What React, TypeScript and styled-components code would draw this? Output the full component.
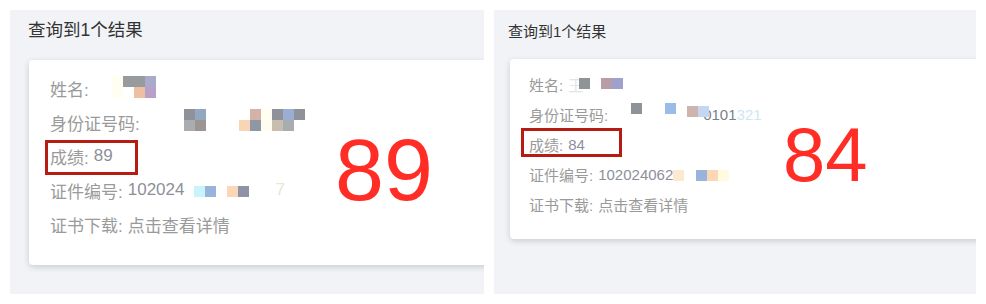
import React from 'react';
import styled, { createGlobalStyle } from 'styled-components';

const GlobalStyle = createGlobalStyle`
  body {
    margin: 0;
    background: #fff;
    font-family: "Liberation Sans", "Noto Sans CJK SC", sans-serif;
  }
`;

type Size = {
  panelW: number;
  titleSize: number;
  titlePad: string;
  cardTop: number;
  cardLeft: number;
  cardH: number;
  cardPad: string;
  rowH: number;
  fontSize: number;
  rowsW: number;
  bigSize: number;
  bigTop: number;
  box: { left: number; top: number; w: number; h: number };
};

const big: Size = {
  panelW: 474,
  titleSize: 17.5,
  titlePad: '10px 0 0 18px',
  cardTop: 20,
  cardLeft: 19,
  cardH: 205,
  cardPad: '11px 0 0 21px',
  rowH: 34,
  fontSize: 17,
  rowsW: 285,
  bigSize: 88,
  bigTop: 55,
  box: { left: -5, top: 1, w: 93, h: 35 },
};

const small: Size = {
  panelW: 482,
  titleSize: 15,
  titlePad: '12px 0 0 14px',
  cardTop: 17,
  cardLeft: 16,
  cardH: 180,
  cardPad: '10px 0 0 19px',
  rowH: 30,
  fontSize: 15,
  rowsW: 254,
  bigSize: 76,
  bigTop: 48,
  box: { left: -8, top: -1, w: 101, h: 29 },
};

const Page = styled.div`
  display: flex;
  gap: 10px;
  padding: 10px;
`;

const Panel = styled.div<{ $s: Size }>`
  width: ${(p) => p.$s.panelW}px;
  height: 284px;
  background: #f2f3f7;
  overflow: hidden;
  display: flex;
  flex-direction: column;
`;

const Title = styled.div<{ $s: Size }>`
  padding: ${(p) => p.$s.titlePad};
  font-size: ${(p) => p.$s.titleSize}px;
  line-height: 20px;
  color: #333;
`;

const Card = styled.div<{ $s: Size }>`
  margin: ${(p) => p.$s.cardTop}px 0 0 ${(p) => p.$s.cardLeft}px;
  width: 640px;
  height: ${(p) => p.$s.cardH}px;
  box-sizing: border-box;
  padding: ${(p) => p.$s.cardPad};
  background: #fff;
  border-radius: 4px;
  box-shadow: 0 2px 6px rgba(0, 0, 0, 0.16);
  display: flex;
  flex-shrink: 0;
`;

const Rows = styled.div<{ $s: Size }>`
  width: ${(p) => p.$s.rowsW}px;
  flex-shrink: 0;
  display: flex;
  flex-direction: column;
`;

const Row = styled.div<{ $s: Size; $mark?: boolean }>`
  position: relative;
  display: flex;
  align-items: center;
  height: ${(p) => p.$s.rowH}px;
  font-size: ${(p) => p.$s.fontSize}px;
  color: #9a9a9a;
  white-space: nowrap;

  &::after {
    content: '';
    display: ${(p) => (p.$mark ? 'block' : 'none')};
    position: absolute;
    left: ${(p) => p.$s.box.left}px;
    top: ${(p) => p.$s.box.top}px;
    width: ${(p) => p.$s.box.w}px;
    height: ${(p) => p.$s.box.h}px;
    box-sizing: border-box;
    border: 3px solid #b71c12;
  }
`;

const Value = styled.span<{ $gap?: number; $color?: string }>`
  margin-left: ${(p) => p.$gap ?? 5}px;
  color: ${(p) => p.$color ?? '#8e9099'};
`;

const Mosaic = styled.span<{ $cols: number; $gap: number; $shift?: number }>`
  display: inline-grid;
  grid-template-columns: repeat(${(p) => p.$cols}, 11px);
  grid-auto-rows: 11px;
  margin-left: ${(p) => p.$gap}px;
  transform: translateY(${(p) => p.$shift ?? 0}px);
  filter: blur(0.3px);
`;

const Cell = styled.span<{ $c: string }>`
  background: ${(p) => p.$c};
`;

const Score = styled.div<{ $s: Size }>`
  margin-top: ${(p) => p.$s.bigTop}px;
  font-size: ${(p) => p.$s.bigSize}px;
  line-height: 1;
  color: #ff2d26;
  align-self: flex-start;
`;

const Block = ({ colors, cols, gap, shift }: { colors: string[]; cols: number; gap: number; shift?: number }) => (
  <Mosaic $cols={cols} $gap={gap} $shift={shift}>
    {colors.map((c, i) => (
      <Cell key={i} $c={c} />
    ))}
  </Mosaic>
);

const App: React.FC = () => {
  return (
    <>
      <GlobalStyle />
      <Page>
        <Panel $s={big}>
          <Title $s={big}>查询到1个结果</Title>
          <Card $s={big}>
            <Rows $s={big}>
              <Row $s={big}>
                姓名:
                <Block
                  cols={4}
                  gap={23}
                  shift={-1}
                  colors={['#fffef0', '#979b9d', '#979b9d', '#aaaacd', '#fffef0', '#ffffff', '#eebfa0', '#b8a0c8']}
                />
              </Row>
              <Row $s={big}>
                身份证号码:
                <Block cols={2} gap={44} shift={-2} colors={['#8f9399', '#93a7c0', '#a8adb0', '#9d9592']} />
                <Block
                  cols={6}
                  gap={33}
                  shift={-2}
                  colors={[
                    '#ffffff', '#d4b2a8', '#fffef0', '#8f9399', '#9aaed4', '#8f9399',
                    '#f9d5b5', '#8f97a4', '#fffdf0', '#c8beb0', '#a8adb0', '#ffffff',
                  ]}
                />
              </Row>
              <Row $s={big} $mark>
                成绩:<Value>89</Value>
              </Row>
              <Row $s={big}>
                证件编号:<Value>102024</Value>
                <Block cols={2} gap={10} shift={1} colors={['#c8f4fb', '#98b4dc']} />
                <Block cols={2} gap={11} shift={1} colors={['#fcd7b5', '#8f93a5']} />
                <Value $gap={26} $color="#e6e6d8">7</Value>
              </Row>
              <Row $s={big}>
                证书下载:<Value $color="#9a9a9a">点击查看详情</Value>
              </Row>
            </Rows>
            <Score $s={big}>89</Score>
          </Card>
        </Panel>

        <Panel $s={small}>
          <Title $s={small}>查询到1个结果</Title>
          <Card $s={small}>
            <Rows $s={small}>
              <Row $s={small}>
                姓名:
                <Value $gap={5} $color="#e4e4e4">王</Value>
                <Block cols={1} gap={-4} shift={-1} colors={['#8f9597']} />
                <Block cols={2} gap={11} shift={-1} colors={['#b89ca8', '#a0a0cc']} />
              </Row>
              <Row $s={small}>
                身份证号码:
                <Block cols={1} gap={23} shift={-6} colors={['#8f9399']} />
                <Block cols={1} gap={23} shift={-6} colors={['#9cbce8']} />
                <Block cols={2} gap={11} shift={-3} colors={['#cdb5ae', '#c4d6f2']} />
                <Value $gap={-6} $color="#7c7f86">0101</Value>
                <Value $gap={0} $color="#cfe6f6">321</Value>
              </Row>
              <Row $s={small} $mark>
                成绩:<Value>84</Value>
              </Row>
              <Row $s={small}>
                证件编号:<Value>102024062</Value>
                <Block cols={1} gap={0} shift={1} colors={['#fde8d0']} />
                <Block cols={3} gap={12} shift={1} colors={['#98b4dc', '#fcd7b5', '#fffbe0']} />
              </Row>
              <Row $s={small}>
                证书下载:<Value $color="#9a9a9a">点击查看详情</Value>
              </Row>
            </Rows>
            <Score $s={small}>84</Score>
          </Card>
        </Panel>
      </Page>
    </>
  );
};

export default App;
